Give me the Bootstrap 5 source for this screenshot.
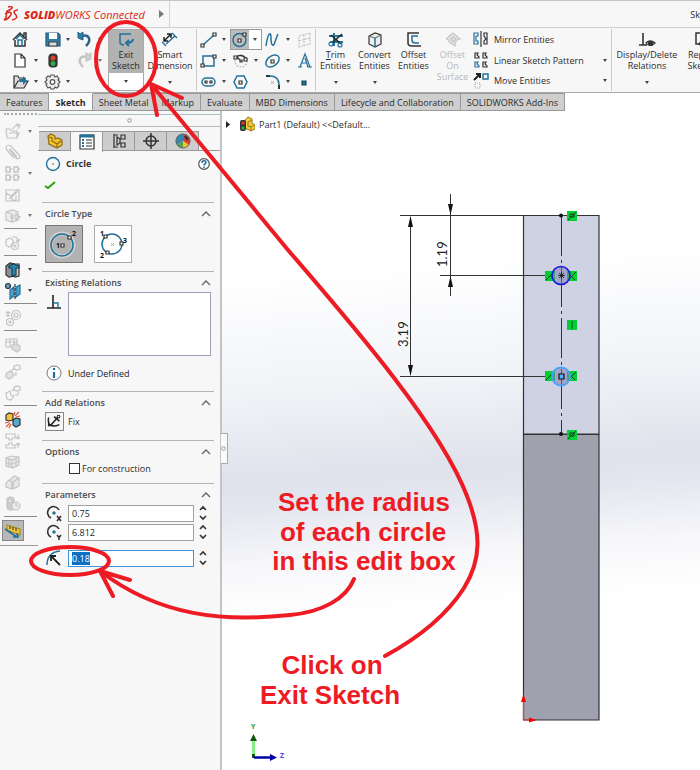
<!DOCTYPE html>
<html lang="en">
<head>
<meta charset="utf-8">
<meta name="viewport" content="width=device-width, initial-scale=1">
<title>SOLIDWORKS Connected</title>
<link href="https://cdn.jsdelivr.net/npm/bootstrap@5.3.0/dist/css/bootstrap.min.css" rel="stylesheet">
<style>
:root{--ink:#2b2b2b;--blue:#22719b;--line:#9b9b9b}
body{font:9px/11px "Open Sans","Noto Sans",sans-serif;color:var(--ink);background:#fff}
button{font:inherit;color:inherit;background:none;border:0;padding:0}
h1,h2{font-size:9px;line-height:12px;font-weight:600;margin:0;color:#4c4c4c}
h1{font-weight:700;color:#333}
svg{display:block;flex:none;fill:none;stroke:#333;stroke-width:1.2}
.ic{width:18px;height:18px}
.titlebar{height:28px;background:#f7f7f7;border-top:1px solid #c4c4c4;border-bottom:1px solid #cfcfcf}
.brand{width:170px;border-right:1px solid #d4d4d4;color:#d9291c;font-style:italic;font-size:11px;padding:0 5px 0 3px;white-space:nowrap}
.brand b{font-weight:800}
.ribbon{height:65px;background:#f7f7f7;border-bottom:1px solid #a9a9a9;padding:1px 0}
.ribbon>*{flex-shrink:0}
.tools{display:grid;grid-template-columns:repeat(3,32px);grid-auto-rows:21px}
.tools.four{grid-template-columns:repeat(4,32px);border-left:1px solid #ccc;border-right:1px solid #ccc;width:120px;padding-left:3px}
.tool{display:flex;align-items:center;height:21px;text-align:left}
.tool.on{background:#bcbcbc;border:1px solid #999;width:32px;margin-left:-2px}
.tool.on .ar{background:#fff;height:19px;padding:0 3px}
.ar::after{content:"";display:block;border:2px solid transparent;border-top:3px solid #444;border-bottom:0}
.ar{display:flex;align-items:center;justify-content:center;width:12px}
.big{display:flex;flex-direction:column;align-items:center;width:39px;height:62px;padding-top:2px;text-align:center}
.big .ar{margin-top:auto;height:18px}
.big.exit{width:36px;border:1px solid #aaa;padding:0;background:#fff}
.exit .face{background:#b2b2b2;width:100%;height:46px;padding-top:1px}
.dim{width:52px}
.wide{width:70px}
.off{color:#b8b8b8;stroke:#c4c4c4}
.off svg{stroke:#c4c4c4}
.off .ar::after{border-top-color:#777}
.cmds{width:140px;border-right:1px solid #ccc;white-space:nowrap}
.cmds button{height:21px;gap:4px;display:flex;align-items:center}
.tabs button{height:18px;padding:0 6px;background:#cfcfcf;border:1px solid #999;border-left:0;white-space:nowrap}
.tabs button.active{background:#fafafa;font-weight:700;border-top-color:#fafafa}
.side{width:38px;background:#f7f7f7;flex:none}
.side .inner{border-bottom:1px solid var(--line);padding:2px 1px 4px 4px}
.side .grip{border-top:2px dotted #aaa;height:8px}
.side button{display:flex;align-items:center;height:21px;gap:2px}
.side hr{margin:2px 0 3px;border-top:1px solid #8a8a8a;opacity:1}
.side .measure{background:#b8b8b8;border:1px solid #888;width:22px;margin-left:-2px;justify-content:center}
.panel{width:184px;flex:none;background:#f7f7f7;border-right:2px solid #c2c4c8;position:relative;z-index:1}
.rule{height:4px;border-bottom:1px solid #a8c3c6}
.dotbar{height:11px}
.ptabs{border-top:1px solid #b9b9b9;border-bottom:1px solid var(--line);padding-top:4px;padding-left:1px;height:25px}
.ptabs button{width:32px;height:20px;background:#cdcdcd;border:1px solid #999;border-left:0;display:flex;align-items:center;justify-content:center}
.ptabs button.active{background:#f7f7f7;height:21px;border-bottom:0}
.titlerow{height:26px;margin:0 10px 0 6px}
.okrow{height:25px;padding:3px 0 0 6px}
.sect{margin:0 6px 0 4px;border-top:1px solid #b4b4b4;padding:4px 3px 0 3px}
.sect .head{height:14px}
.sect .fields{gap:5px;margin-top:2px}
.kind{width:38px;height:38px;border:1px solid #aaa;background:#fff;display:flex;align-items:center;justify-content:center}
.kind.on{background:#b2b2b2;border-color:#777}
.kinds{gap:11px;margin-top:4px}
.s1{height:69px}.s2{height:120px}.s3{height:49px}.s4{height:43px}
.rels{height:64px;border:1px solid #9b9fb8;border-radius:0;padding:2px;resize:none;font-size:9px}
.status{gap:5px;margin-top:8px;color:#222}
.fix{gap:4px;margin-top:2px}
.fix svg{border:1px solid #888}
.opt{gap:2px;margin-top:4px}
.sect .second{margin-top:1px}
.sect .third{margin-top:8px}
.num{height:17px;border:1px solid #a0a0a0;border-radius:0;padding:0 3px;font-size:9px;line-height:15px;width:126px;min-height:0;color:#222}
.num:focus,.num.hot{border-color:#3f94dc;box-shadow:none}
.num::selection{background:#0b6fc4;color:#fff}
.chk{width:11px;height:11px;margin:0;border:1px solid #333;border-radius:0!important}
.view{background:linear-gradient(176deg,#fff 0 24%,#f1f3f7 41%,#dfe2eb 54%,#e4e7ef 58%,#f7f7fa 66%,#fff 74%)}
.canvas{position:absolute;left:0;top:0}
.flap{position:absolute;right:-8px;top:322px;width:7px;height:31px;background:#fafafa;border:1px solid #aaa;border-left:0}
.treebar{height:26px;gap:6px}
.notes{position:absolute;left:0;top:0;z-index:2;pointer-events:none;stroke:#ed1c24;stroke-width:4;stroke-linecap:round;stroke-linejoin:round}
.notes text{font:bold 26px "Liberation Sans",Arial,sans-serif;fill:#ed1c24;stroke:none;text-anchor:middle}
</style>
<script src="https://cdn.jsdelivr.net/npm/bootstrap@5.3.0/dist/js/bootstrap.bundle.min.js"></script>
</head>
<body class="d-flex flex-column min-vh-100 position-relative overflow-hidden">
<header class="titlebar d-flex align-items-center justify-content-between flex-shrink-0">
  <div class="brand d-flex align-items-center h-100">
    <svg width="17" height="17" viewBox="0 0 17 17" style="stroke:#d9291c;stroke-width:1.5"><path d="M5 1C8 0 11 1 8 3L3 6M2 8C7 5 10 6 7 10C5 13 2 14 1 14C3 13 4 9 3 8M15 4C11 4 10 6 12 8C15 11 14 13 9 14"/></svg>
    <span class="ms-1"><b>SOLID</b>WORKS Connected</span>
    <svg class="ms-auto" width="5" height="8" viewBox="0 0 5 8" style="fill:#777;stroke:none"><path d="M0 0 5 4 0 8z"/></svg>
  </div>
  <span class="text-nowrap">Sk</span>
</header>

<nav class="ribbon d-flex flex-shrink-0 overflow-hidden" aria-label="Sketch ribbon">
  <div class="tools ms-2 ps-1">
    <button class="tool" aria-label="Home"><svg class="ic" viewBox="0 0 18 18"><path d="M1 9 8 2 15 9M3 9V15H13V9M12 5V2H14V7" stroke-width="1.5"/><path d="M6 15V9H10V15M4 8 8 4 12 8" stroke="#22719b" stroke-width="1.5"/></svg></button>
    <button class="tool" aria-label="Save"><svg class="ic" viewBox="0 0 18 18"><path d="M2 2H14L16 4V15H2z" fill="#2d7da7" stroke="#245a78"/><path d="M5 2H13V8H5z" fill="#fff" stroke="none"/><path d="M5 11H13V15H5z" fill="#ddd" stroke="#444"/></svg><span class="ar"></span></button>
    <button class="tool" aria-label="Undo"><svg class="ic" viewBox="0 0 18 18"><path d="M6 5C13 3 16 9 10 15" stroke="#28658a" stroke-width="2.500"/><path d="M7 1V9L2 7V1L4 3z" fill="#2d7da7" stroke="#28658a" stroke-width="1"/></svg><span class="ar"></span></button>
    <button class="tool" aria-label="New"><svg class="ic" viewBox="0 0 18 18"><path d="M3 2H9L13 6V15H3zM9 2V6H13" fill="#fff"/></svg><span class="ar"></span></button>
    <button class="tool" aria-label="Rebuild"><svg class="ic" viewBox="0 0 18 18"><rect x="5" y="2" width="8" height="13" rx="3" fill="#333"/><circle cx="9" cy="6" r="2.5" fill="#e3402e" stroke="none"/><circle cx="9" cy="11.500" r="2.500" fill="#31a94d" stroke="none"/></svg></button>
    <button class="tool off" aria-label="Redo"><svg class="ic" viewBox="0 0 18 18"><path d="M11 5C4 3 1 9 7 15" stroke-width="2.500"/><path d="M10 1V9L15 7V1L13 3z" fill="#d0d0d0"/></svg><span class="ar"></span></button>
    <button class="tool" aria-label="Open"><svg class="ic" viewBox="0 0 18 18"><path d="M2 15V3H6L7 5H13V8M2 15 6 8H16L12 15z" fill="#ddd"/><path d="M7 6H11V3L15 8 11 12V9H8z" fill="#22719b" stroke="none"/></svg><span class="ar"></span></button>
    <button class="tool" aria-label="Options"><svg class="ic" viewBox="0 0 18 18"><path d="M7 2H10L11 4 13 3 15 6 14 7 16 9 14 11 15 13 13 15 11 14 10 16H7L6 14 4 15 2 12 3 11 1 9 3 7 2 5 4 3 6 4z" stroke="#555" stroke-width="1.200" fill="#eee"/><circle cx="8.500" cy="9" r="2.300" stroke="#555" fill="#fff"/></svg><span class="ar"></span></button>
  </div>
  <button class="big exit"><span class="face d-flex flex-column align-items-center"><svg class="ic" viewBox="0 0 18 18"><path d="M14 3H3V11C3 13 4 14 7 14" stroke="#22719b" stroke-width="1.500"/><path d="M16 8C16 11 13 12 9 12M12 9 9 12 12 15" stroke="#22719b" stroke-width="2"/></svg><span>Exit<br>Sketch</span></span><span class="ar"></span></button>
  <button class="big dim"><svg class="ic" viewBox="0 0 18 18"><path d="M3 10 10 3M3 6V10H7M6 3H10V7" stroke="#222" stroke-width="1.500"/><path d="M5 15 1 11M16 7 11 2M5 13 14 5" stroke="#22719b" stroke-width="1.400"/></svg><span>Smart<br>Dimension</span><span class="ar"></span></button>
  <div class="tools four">
    <button class="tool" aria-label="Line"><svg class="ic" viewBox="0 0 18 18"><path d="M3 14 14 4" stroke="#22719b" stroke-width="1.500"/><path d="M1 13H4V16H1zM13 2H16V5H13z" fill="#fff"/></svg><span class="ar"></span></button>
    <button class="tool on" aria-label="Circle"><svg class="ic" viewBox="0 0 18 18"><circle cx="8.500" cy="9" r="6.500" stroke="#22719b" stroke-width="1.500"/><path d="M7 8H10V11H7zM12 2H15V5H12z" fill="#fff"/></svg><span class="ar"></span></button>
    <button class="tool" aria-label="Spline"><svg class="ic" viewBox="0 0 18 18"><path d="M2 15C4 1 7 0 7 7S9 17 11 11 14 3 14 3" stroke="#22719b" stroke-width="1.500"/></svg><span class="ar"></span></button>
    <button class="tool off" aria-label="Plane"><svg class="ic" viewBox="0 0 18 18"><path d="M3 5 14 2V13L3 16zM8 4V15M3 10 14 7" stroke-dasharray="2 1"/></svg></button>
    <button class="tool" aria-label="Rectangle"><svg class="ic" viewBox="0 0 18 18"><path d="M3 4H14V14H3z" stroke="#22719b" stroke-width="1.500"/><path d="M1 12H4V15H1zM13 3H16V6H13z" fill="#fff"/></svg><span class="ar"></span></button>
    <button class="tool" aria-label="Arc"><svg class="ic" viewBox="0 0 18 18"><circle cx="9" cy="9" r="6" stroke="#aaa" stroke-dasharray="1.500 1.500"/><path d="M4 5C8 2 13 4 14 7" stroke-width="1.500"/><path d="M2 4H5V7H2zM12 6H15V9H12zM8 8H10V10H8zM5 5 8 8" fill="#fff"/></svg><span class="ar"></span></button>
    <button class="tool" aria-label="Ellipse"><svg class="ic" viewBox="0 0 18 18"><ellipse cx="8.500" cy="9" rx="7.500" ry="5" transform="rotate(-38 8.500 9)" stroke="#22719b" stroke-width="1.500"/><path d="M7 8H10V11H7z"/></svg><span class="ar"></span></button>
    <button class="tool" aria-label="Text"><svg class="ic" viewBox="0 0 18 18"><path d="M2 15H6M11 15H16M4 15 9 2 14 15M9 6 12 15M6 11H11" stroke="#22719b"/></svg></button>
    <button class="tool" aria-label="Slot"><svg class="ic" viewBox="0 0 18 18"><rect x="2" y="5" width="13" height="8" rx="4" stroke="#22719b" stroke-width="1.500"/><path d="M5 8H7V10H5zM10 8H12V10H10z"/></svg><span class="ar"></span></button>
    <button class="tool" aria-label="Polygon"><svg class="ic" viewBox="0 0 18 18"><path d="M5 3H12L15 9 12 15H5L2 9z" stroke="#22719b" stroke-width="1.500"/><path d="M7 8H10V11H7z"/></svg></button>
    <button class="tool" aria-label="Fillet"><svg class="ic" viewBox="0 0 18 18"><path d="M2 3H6M15 12V16" stroke-width="2"/><path d="M6 3C12 3 15 6 15 12" stroke="#22719b" stroke-width="1.500"/><path d="M7 8 10 11M10 8 7 11" stroke="#aaa" stroke-width="1"/></svg><span class="ar"></span></button>
    <button class="tool" aria-label="Point"><svg class="ic" viewBox="0 0 18 18"><path d="M6 8H10V12H6z" fill="#22719b" stroke="#16445e"/></svg></button>
  </div>
  <button class="big"><svg class="ic" viewBox="0 0 18 18"><path d="M2 5H16M3 11H16M7 2V15" stroke="#22719b" stroke-width="2"/><path d="M15 3 5 12M4 4 14 13" stroke="#222" stroke-width="1.500"/><circle cx="4" cy="13" r="2" stroke="#22719b"/><circle cx="13" cy="14" r="2" stroke="#22719b"/></svg><span><u>T</u>rim<br>Entities</span><span class="ar"></span></button>
  <button class="big"><svg class="ic" viewBox="0 0 18 18"><path d="M3 5 9 2 15 4V13L9 16 3 13z" fill="#eee"/><path d="M3 5 9 7 15 4" stroke="#777"/><path d="M9 7V16" stroke="#22719b" stroke-width="1.500"/></svg><span>Convert<br>Entities</span><span class="ar"></span></button>
  <button class="big"><svg class="ic" viewBox="0 0 18 18"><path d="M14 2H3V12C3 14 5 15 7 15H16" stroke-width="1.500"/><path d="M13 5H7V9C7 11 8 12 10 12H14" stroke="#22719b" stroke-width="1.500"/></svg><span>Offset<br>Entities</span></button>
  <button class="big off" disabled><svg class="ic" viewBox="0 0 18 18"><path d="M2 8 9 2 16 8C13 8 11 11 11 15L5 11C6 10 4 8 2 8M7 8 9 6 12 8 9 11z" fill="#e5e5e5"/></svg><span>Offset<br>On<br>Surface</span></button>
  <div class="cmds d-flex flex-column">
    <button><svg class="ic" viewBox="0 0 18 18"><path d="M2 3H6V6H4V11H6V14H2z" stroke="#22719b"/><path d="M9 1V17M15 3H12V6L14 9 12 11V14H15z"/></svg>Mirror Entities</button>
    <button><svg class="ic" viewBox="0 0 18 18"><path d="M3 2H6L5 4 7 6V7H3zM11 2H14L13 4 15 6V7H11zM11 11H14L13 13 15 15V16H11z"/><path d="M3 11H6L5 13 7 15V16H3z" stroke="#22719b"/></svg>Linear Sketch Pattern<span class="ar ms-auto"></span></button>
    <button><svg class="ic" viewBox="0 0 18 18"><path d="M2 8 8 2M4 2H8V6" stroke="#222" stroke-width="2"/><path d="M11 2H16V7H11z" stroke="#22719b" stroke-width="1.500"/><path d="M3 11H8V16H3z" stroke="#aaa" stroke-dasharray="1 1"/></svg>Move Entities<span class="ar ms-auto"></span></button>
  </div>
  <button class="big wide"><svg class="ic" viewBox="0 0 18 18"><path d="M5 2V14M1 14H9" stroke-width="1.600"/><path d="M8 12Q12 8 17 12 12 17 8 12z" fill="#fff"/><circle cx="12.500" cy="12.500" r="2" fill="#333"/></svg><span>Display/Delete<br>Relations</span><span class="ar"></span></button>
  <button class="big"><svg class="ic" viewBox="0 0 18 18"><path d="M15 2H3V13H8" stroke-width="1.500"/><path d="M6 13 10 7 14 11 8 15z" fill="#22719b"/></svg><span>Repair<br>Sketch</span></button>
</nav>

<div class="tabs d-flex flex-shrink-0" role="tablist">
  <button role="tab">Features</button><button role="tab" class="active" aria-selected="true">Sketch</button><button role="tab">Sheet Metal</button><button role="tab">Markup</button><button role="tab">Evaluate</button><button role="tab">MBD Dimensions</button><button role="tab">Lifecycle and Collaboration</button><button role="tab">SOLIDWORKS Add-Ins</button>
</div>

<main class="d-flex flex-grow-1">
  <aside class="side" aria-label="Assembly tools"><div class="inner">
    <div class="grip"></div>
    <button class="off" aria-label="Insert component"><svg class="ic" viewBox="0 0 18 18"><path d="M2 6H6L8 8H13V15H3zM5 10H15L13 15M9 6C10 3 13 2 15 3M12 1 16 2 14 6"/></svg><span class="ar"></span></button>
    <button class="off" aria-label="Mate"><svg class="ic" viewBox="0 0 18 18"><path d="M5 5 12 14C15 16 17 13 15 11L7 2C4 0 0 3 3 6L10 14M6 5 13 13"/></svg></button>
    <button class="off" aria-label="Component pattern"><svg class="ic" viewBox="0 0 18 18"><path d="M2 2H6V7H2zM10 2H14V7H10zM2 10H6V15H2zM10 10H14V15H10zM6 4H8M14 4H16M6 12H8M14 12H16" stroke-width="1.500"/></svg><span class="ar"></span></button>
    <button class="off" aria-label="Smart fasteners"><svg class="ic" viewBox="0 0 18 18"><path d="M2 4H15V15H2zM2 7 7 10 15 3M5 13 13 6M8 11V14H12V9"/></svg></button>
    <button class="off" aria-label="Move component"><svg class="ic" viewBox="0 0 18 18"><path d="M2 5 8 3 14 5V13L8 15 2 13zM2 5 8 7V15M7 9H12V7L16 10 12 13V11H7z" fill="#eee"/></svg><span class="ar"></span></button>
    <hr>
    <button class="off" aria-label="Show hidden"><svg class="ic" viewBox="0 0 18 18"><path d="M2 6 6 4 9 6V11L5 13 2 11zM8 3C12 2 14 4 14 7M12 6 14 8 16 5"/><circle cx="11" cy="12" r="3.500"/><circle cx="11" cy="12" r="1"/></svg></button>
    <hr>
    <button aria-label="Assembly features"><svg class="ic" viewBox="0 0 18 18"><path d="M2 5 6 2 10 3V15L5 16 2 14z" fill="#8a9095"/><path d="M10 3 15 3V15L11 16 9 15z" fill="#c9cdd0"/><path d="M5 5 9 3 15 5V7H12V14L8 15V7H5z" fill="#2c86b5" stroke="#183c50"/></svg><span class="ar"></span></button>
    <button aria-label="Reference geometry"><svg class="ic" viewBox="0 0 18 18"><circle cx="4" cy="4" r="2.500" fill="#5ca0c3"/><path d="M6 8 10 5V14L6 17zM12 5 16 3V12L12 15z" fill="#46a3ce" stroke="#22719b"/><path d="M11 2V17" stroke-dasharray="3 1"/></svg><span class="ar"></span></button>
    <hr>
    <button class="off" aria-label="Motion study"><svg class="ic" viewBox="0 0 18 18"><circle cx="12" cy="6" r="4.500"/><circle cx="12" cy="6" r="2"/><circle cx="6" cy="13" r="3.500"/><circle cx="6" cy="13" r="1"/><path d="M2 3 6 7M6 3 2 7M4 2V8"/></svg></button>
    <hr>
    <button class="off" aria-label="Bill of materials"><svg class="ic" viewBox="0 0 18 18"><path d="M2 3H13V11H2zM2 6H13M6 3V11M10 3V11"/><path d="M8 9 12 8 16 10V14L13 16 8 13z" fill="#ddd"/></svg></button>
    <hr>
    <button class="off" aria-label="Exploded view"><svg class="ic" viewBox="0 0 18 18"><path d="M2 11 6 8 9 10V14L5 16 2 14z" fill="#e4e4e4"/><path d="M10 3 13 2 16 3V6L13 7 10 6zM7 8 11 5M12 9V12H9"/></svg></button>
    <button class="off" aria-label="Explode line sketch"><svg class="ic" viewBox="0 0 18 18"><path d="M2 9 6 7 7 11 10 12 7 16 3 15z"/><path d="M10 3 13 2 16 3V6L13 7 10 6zM8 7 11 4M14 8V11H11"/></svg></button>
    <hr>
    <button aria-label="Interference"><svg class="ic" viewBox="0 0 18 18"><path d="M2 4 5 2 9 3V9L5 10 2 9z" fill="#f2c43c"/><path d="M9 9 12 7 16 8V14L12 16 9 14z" fill="#58a8c9"/><path d="M11 5 15 1M12 6 16 5M10 4 11 1M6 12 2 16M7 13 5 17M5 11 1 12" stroke="#e8573c"/></svg></button>
    <button class="off" aria-label="Clearance"><svg class="ic" viewBox="0 0 18 18"><path d="M2 2H11V6H8V8H5V6H2zM5 11H8V13H11V16H2V13H5zM14 2V7M12 5 14 7 16 5M14 16V11M12 13 14 11 16 13"/></svg></button>
    <button class="off" aria-label="Hole alignment"><svg class="ic" viewBox="0 0 18 18"><path d="M2 5 7 3 15 4V12L9 15 2 13zM2 5 8 7V15M8 7 15 4M5 6V14M12 5V14M2 10 8 11 15 8" fill="#e8e8e8"/></svg></button>
    <button class="off" aria-label="Visualization"><svg class="ic" viewBox="0 0 18 18"><path d="M2 9 5 6 8 8V15L2 13zM6 6 10 2 15 4V12L9 15M9 8 15 4M9 8V15" fill="#e8e8e8"/></svg></button>
    <button class="off" aria-label="Performance"><svg class="ic" viewBox="0 0 18 18"><rect x="3" y="2" width="7" height="13" rx="3" fill="#ccc"/><circle cx="6" cy="6" r="1.500" fill="#fff"/><circle cx="12" cy="11" r="4" fill="#eee"/><path d="M12 8V11H14"/></svg></button>
    <hr>
    <button class="measure" aria-label="Measure"><svg class="ic" viewBox="0 0 18 18"><path d="M3 3 16 7V13L3 8z" fill="#f0c53c" stroke="#a98a25"/><path d="M6 4V7M9 5V8M12 6V9" stroke-width="1"/><path d="M1 7 13 15M9 15H14L13 11" stroke="#22719b" stroke-width="1.700"/></svg></button>
  </div></aside>

  <section class="panel" aria-label="Circle properties">
    <div class="rule"></div>
    <div class="dotbar d-flex align-items-center justify-content-center"><svg width="5" height="5" viewBox="0 0 5 5"><circle cx="2.500" cy="2.500" r="1.800" stroke="#999" stroke-width="1"/></svg></div>
    <div class="ptabs d-flex" role="tablist">
      <button role="tab" aria-label="Feature tree"><svg class="ic" viewBox="0 0 18 18"><path d="M2 4 5 2 9 4V7L12 6 16 8V13L11 16 3 12z" fill="#f2c230" stroke="#8a6a12"/><path d="M3 5 6 6V9L11 12 15 9M11 12V15" stroke="#8a6a12"/></svg></button>
      <button role="tab" class="active" aria-label="Properties"><svg class="ic" viewBox="0 0 18 18"><path d="M2 2H16V16H2z" fill="#fff"/><path d="M2 3H16" stroke="#22719b" stroke-width="3"/><path d="M4 7H6M4 10H6M4 13H6" stroke="#22719b" stroke-width="2"/><path d="M8 7H14M8 10H14M8 13H14"/></svg></button>
      <button role="tab" aria-label="Configurations"><svg class="ic" viewBox="0 0 18 18"><path d="M4 2V16M4 3H8M4 15H8M7 5 10 7V11L7 13zM11 3H15V7H11zM11 11H15V15H11z"/></svg></button>
      <button role="tab" aria-label="Dimensions"><svg class="ic" viewBox="0 0 18 18"><circle cx="9" cy="9" r="5" stroke-width="1.500"/><path d="M9 1V17M1 9H17" stroke-width="1.500"/></svg></button>
      <button role="tab" aria-label="Display"><svg class="ic" viewBox="0 0 18 18"><g stroke="none"><path d="M9 9V2A7 7 0 0 0 3 13z" fill="#3186b5"/><path d="M9 9V2A7 7 0 0 1 15 13z" fill="#d93f37"/><path d="M9 9 3 13A7 7 0 0 0 9 16z" fill="#54a345"/><path d="M9 9 15 13A7 7 0 0 1 9 16z" fill="#efc331"/></g><circle cx="9" cy="9" r="7" stroke="#666" stroke-width="1"/><path d="M11 4 14 8" stroke-width="2.500"/></svg></button>
    </div>
    <div class="titlerow d-flex align-items-center gap-1">
      <svg class="ic" viewBox="0 0 18 18"><circle cx="9" cy="9" r="6.500" stroke="#22719b" stroke-width="1.400"/><path d="M8 8 10 10M10 8 8 10" stroke="#aaa" stroke-width="1"/></svg>
      <h1>Circle</h1>
      <button class="ms-auto" aria-label="Help"><svg width="12" height="12" viewBox="0 0 12 12"><circle cx="6" cy="6" r="5.300" fill="#fff" stroke="#555"/><path d="M4 5C4 2 8 2 8 4.500 8 6 6 5.500 6 7.500M6 8.500V10" stroke="#22719b" stroke-width="1.500"/></svg></button>
    </div>
    <div class="okrow"><button aria-label="OK"><svg width="12" height="11" viewBox="0 0 12 11"><path d="M1 6 4 8 11 2" stroke="#2fa00f" stroke-width="2"/></svg></button></div>

    <div class="sect s1">
      <div class="head d-flex justify-content-between align-items-center"><h2>Circle Type</h2><svg width="10" height="6" viewBox="0 0 10 6"><path d="M1 5 5 1 9 5" stroke="#666" stroke-width="1.400"/></svg></div>
      <div class="kinds d-flex">
        <button class="kind on" aria-label="Centre circle"><svg width="30" height="30" viewBox="0 0 30 30"><circle cx="13" cy="16" r="11.500" stroke="#fff" stroke-width="4" opacity=".4"/><circle cx="13" cy="16" r="11" stroke="#22719b" stroke-width="1.500"/><path d="M12 15H15V18H12zM19 7H22V10H19z" fill="#fff"/><g fill="#111" stroke="none" font-size="7" font-weight="700"><text x="7" y="19">1</text><text x="23" y="7">2</text></g></svg></button>
        <button class="kind" aria-label="Perimeter circle"><svg width="30" height="30" viewBox="0 0 30 30"><circle cx="14" cy="15" r="10" stroke="#22719b" stroke-width="1.500"/><path d="M6 6H9V9H6zM22 13H25V16H22zM8 22H11V25H8z" fill="#fff"/><path d="M13 14 16 17M16 14 13 17" stroke="#aaa" stroke-width="1"/><g fill="#111" stroke="none" font-size="7" font-weight="700"><text x="2" y="7">1</text><text x="25" y="14">3</text><text x="2" y="29">2</text></g></svg></button>
      </div>
    </div>

    <div class="sect s2">
      <div class="head d-flex justify-content-between align-items-center"><h2><label for="rel">Existing Relations</label></h2><svg width="10" height="6" viewBox="0 0 10 6"><path d="M1 5 5 1 9 5" stroke="#666" stroke-width="1.400"/></svg></div>
      <div class="fields d-flex">
        <svg class="ic" viewBox="0 0 18 18"><path d="M8 3V16M2 16H16" stroke="#222" stroke-width="1.600"/><path d="M8 11H13V16" stroke="#22719b" stroke-width="1.400"/></svg>
        <textarea id="rel" class="rels form-control" readonly></textarea>
      </div>
      <div class="status d-flex align-items-center"><svg class="ic" viewBox="0 0 18 18"><circle cx="9" cy="9" r="7" fill="#fff" stroke="#777" stroke-width="1"/><path d="M9 8V14M9 4V6" stroke="#22719b" stroke-width="2.200"/></svg>Under Defined</div>
    </div>

    <div class="sect s3">
      <div class="head d-flex justify-content-between align-items-center"><h2>Add Relations</h2><svg width="10" height="6" viewBox="0 0 10 6"><path d="M1 5 5 1 9 5" stroke="#666" stroke-width="1.400"/></svg></div>
      <button class="fix d-flex align-items-center"><svg width="19" height="19" viewBox="0 0 19 19"><path d="M5 14 13 5M9 4 15 9" stroke="#222" stroke-width="1.800"/><path d="M3 5C1 13 6 17 15 13M3 9V14H8" stroke="#222" stroke-width="1.600"/><circle cx="14" cy="4" r="1.500" stroke="#222"/></svg>Fix</button>
    </div>

    <div class="sect s4">
      <div class="head d-flex justify-content-between align-items-center"><h2>Options</h2><svg width="10" height="6" viewBox="0 0 10 6"><path d="M1 5 5 1 9 5" stroke="#666" stroke-width="1.400"/></svg></div>
      <div class="opt d-flex align-items-center ps-4"><input id="con" type="checkbox" class="chk form-check-input"><label for="con">For construction</label></div>
    </div>

    <div class="sect">
      <div class="head d-flex justify-content-between align-items-center"><h2>Parameters</h2><svg width="10" height="6" viewBox="0 0 10 6"><path d="M1 5 5 1 9 5" stroke="#666" stroke-width="1.400"/></svg></div>
      <div class="fields d-flex align-items-center"><svg class="ic" viewBox="0 0 18 18"><path d="M6 14A6 6 0 1 1 14 6" stroke-width="1.600"/><circle cx="9" cy="9" r="1.700" fill="#22719b" stroke="none"/><path d="M12 12 16 17M16 12 12 17" stroke-width="1.600"/></svg><input class="num form-control" aria-label="Centre X" value="0.75"><svg width="8" height="16" viewBox="0 0 8 16"><path d="M1 5 4 2 7 5M1 11 4 14 7 11" stroke-width="1.600"/></svg></div>
      <div class="fields second d-flex align-items-center"><svg class="ic" viewBox="0 0 18 18"><path d="M6 14A6 6 0 1 1 14 6" stroke-width="1.600"/><circle cx="9" cy="9" r="1.700" fill="#22719b" stroke="none"/><path d="M12 12 14 14.500 16 12M14 14V17" stroke-width="1.600"/></svg><input class="num form-control" aria-label="Centre Y" value="6.812"><svg width="8" height="16" viewBox="0 0 8 16"><path d="M1 5 4 2 7 5M1 11 4 14 7 11" stroke-width="1.600"/></svg></div>
      <div class="fields third d-flex align-items-center"><svg class="ic" viewBox="0 0 18 18"><path d="M2 16C2 8 6 3 15 2" stroke="#22719b" stroke-width="1.400"/><path d="M6 7 15 16M6 12V7H11" stroke="#222" stroke-width="1.800"/></svg><input id="radius" class="num hot form-control" aria-label="Radius" value="0.18" autofocus><svg width="8" height="16" viewBox="0 0 8 16"><path d="M1 5 4 2 7 5M1 11 4 14 7 11" stroke-width="1.600"/></svg></div>
    </div>
    <button class="flap" aria-label="Collapse panel"><svg width="5" height="5" viewBox="0 0 5 5"><circle cx="2.500" cy="2.500" r="1.800" stroke="#999" stroke-width="1"/></svg></button>
  </section>

  <section class="view flex-grow-1 position-relative overflow-hidden" aria-label="Model view">
    <svg class="canvas" width="478" height="659" viewBox="222 111 478 659" stroke-width="1">
      <path d="M523.500 215.500H599V434H523.500z" fill="#cfd2e2" stroke="#333"/>
      <path d="M523.500 434.500H599V720H523.500z" fill="#9fa1ae" stroke="#333"/>
      <g stroke="#333" stroke-width="1"><path d="M400 215.500H524M440 275.500H553M400 376.500H553M410.500 217V375M450.500 194V296"/>
      <path d="M561.500 216V434" stroke-dasharray="40 4 3 4"/></g>
      <g fill="#111" stroke="none"><path d="M410.500 216 413 227H408zM410.500 376 413 365H408zM450.500 215 453 204H448zM450.500 276 453 287H448z"/><circle cx="561" cy="215.500" r="2"/><circle cx="561" cy="434" r="2"/></g>
      <g fill="#00cf35" stroke="none"><path d="M567 211H577V221H567zM567 430H577V440H567zM567 320H577V330H567zM545 271H555V281H545zM567 271H577V281H567zM545 371H555V381H545zM567 371H577V381H567z"/></g>
      <g stroke="#12401c" stroke-width="1"><path d="M568 220 576 212M568 439 576 431M572 321V329M546 280 554 272M568 280 576 272M546 380 554 372M568 380 576 372M550 275 554 280M570 275 575 280M550 375 554 380M570 375 575 380"/><path d="M570 214H574V217H570zM570 433H574V436H570z"/></g>
      <circle cx="561" cy="275.500" r="9" fill="#7777ae" fill-opacity=".5" stroke="#1717e6" stroke-width="1.500"/>
      <path d="M559 273 564 278M564 273 559 278M561.500 272V279M558 275.500H565" stroke="#111" stroke-width=".8"/>
      <circle cx="561" cy="376.500" r="9" fill="#7777ae" fill-opacity=".5" stroke="#4ba3f5" stroke-width="2"/>
      <path d="M559 374H564V379H559z" fill="#55b0ff" stroke="#111"/>
      <g fill="#222" stroke="none" font-family="Lato, sans-serif" font-size="13"><text transform="translate(447 267) rotate(-90)">1.19</text><text transform="translate(408 347) rotate(-90)">3.19</text></g>
      <path d="M523.500 720V701M523.500 720H530" stroke="#f33"/><path d="M523.500 694 526 702H521zM537 720 529 717.500V722.500z" fill="#f00" stroke="none"/>
      <path d="M253.500 756V741" stroke="#86ee86" stroke-width="3"/><path d="M253.500 734 257 741H250zM252 754H255V758H252z" fill="#0a5a0a" stroke="none"/><path d="M254 757.500H271" stroke="#0000a0" stroke-width="2.500"/><path d="M277 757.500 270 754V761z" fill="#0000a0" stroke="none"/>
      <g stroke="none" font-size="7" font-weight="700"><text x="251" y="729" fill="#2c8c2c">Y</text><text x="280" y="758" fill="#4747f5">Z</text></g>
    </svg>
    <div class="treebar position-relative d-flex align-items-center ps-1">
      <svg width="4" height="7" viewBox="0 0 4 7" style="fill:#222;stroke:none"><path d="M0 0 4 3.500 0 7z"/></svg>
      <div class="d-flex align-items-center gap-1 ps-1"><svg width="15" height="16" viewBox="0 0 15 16"><path d="M5 4 8 1 12 3V7L15 9V13L11 15 5 12z" fill="#f2c93c" stroke="#9a7b18" stroke-width="1"/><path d="M8 6 12 4M8 6V10L11 11 14 9M11 11V15" stroke="#9a7b18" stroke-width="1"/><rect x="0" y="4" width="6" height="11" rx="2" fill="#333" stroke="none"/><circle cx="3" cy="7" r="1.800" fill="#d33" stroke="none"/><circle cx="3" cy="12" r="1.800" fill="#2a4" stroke="none"/></svg><span>Part1 (Default) &lt;&lt;Default...</span></div>
    </div>
  </section>
</main>

<svg class="notes" width="700" height="770" viewBox="0 0 700 770">
  <ellipse cx="126" cy="59" rx="30" ry="37"/>
  <path d="M151 84 288 250C350 322 440 425 467 496 481 532 482 559 464 588 448 613 420 637 385 656M182 98 151 84 157 115"/>
  <ellipse cx="70" cy="561" rx="39" ry="14"/>
  <path d="M354 579C346 599 322 612 290 615 225 622 160 617 100 571M130 580 100 571 113 596"/>
  <text x="364" y="511">Set the radius</text><text x="363" y="541">of each circle</text><text x="364" y="570">in this edit box</text>
  <text x="332" y="674">Click on</text><text x="330" y="704">Exit Sketch</text>
</svg>
<script>document.getElementById('radius').select();</script>
</body>
</html>
